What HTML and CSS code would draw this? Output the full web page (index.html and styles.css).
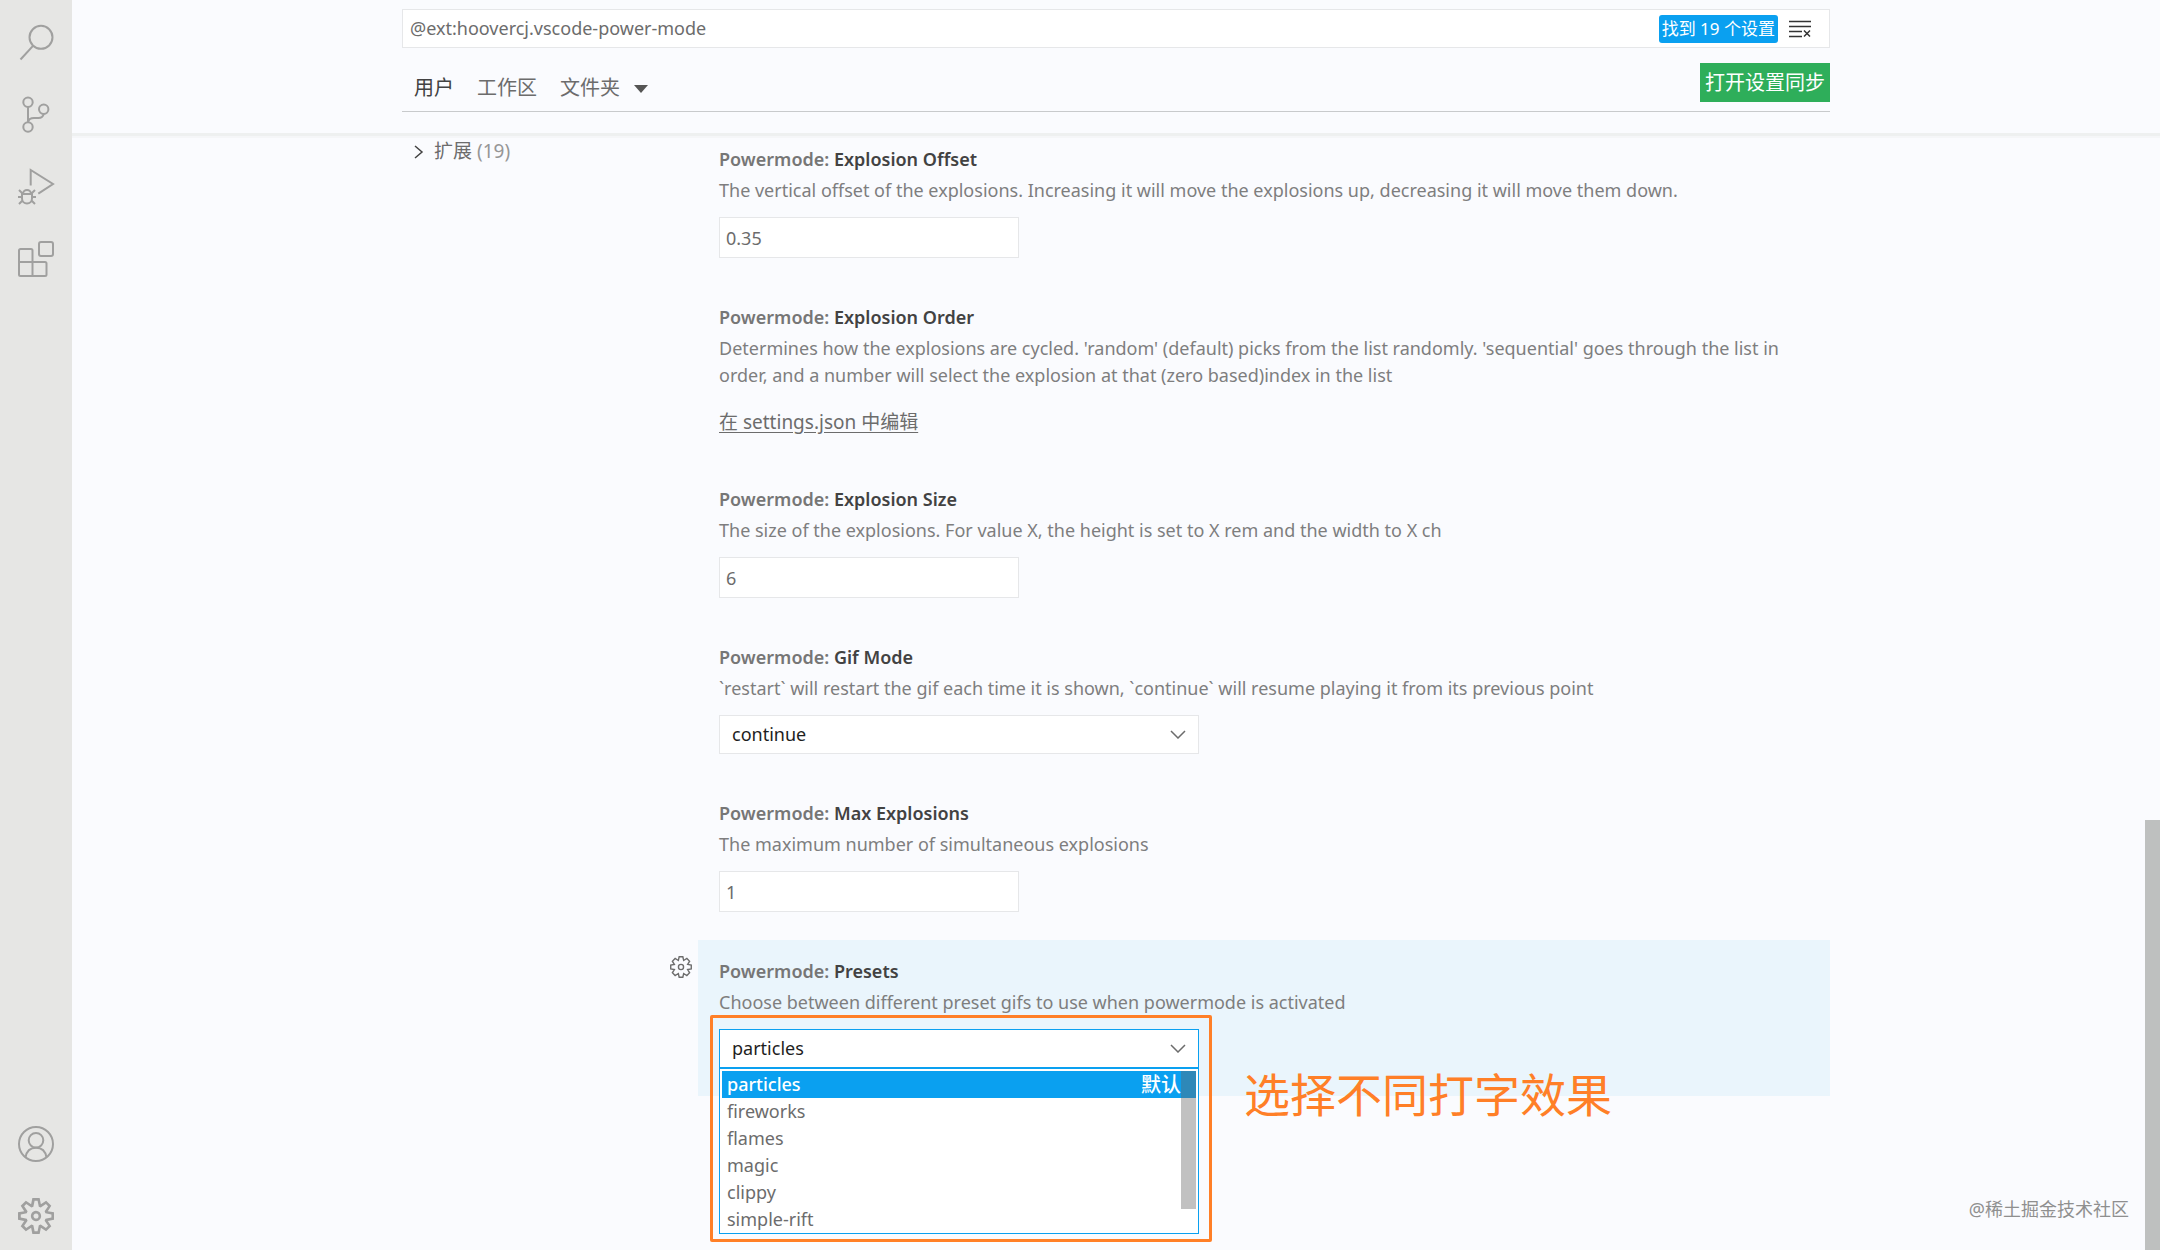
FILE: index.html
```html
<!DOCTYPE html>
<html lang="zh-CN">
<head>
  <meta charset="utf-8">
  <title>设置</title>
  <meta name="viewport" content="width=device-width, initial-scale=1">
  <link rel="stylesheet" href="styles.css">
</head>
<body>
  <nav class="activity-bar">
    <div class="activity-group">
      <button class="activity-item" aria-label="搜索">
        <svg viewBox="0 0 36 36"><circle cx="23" cy="13.3" r="11.5"/><path d="M2.5 35.5L15 21.8"/></svg>
      </button>
      <button class="activity-item" aria-label="源代码管理">
        <svg viewBox="0 0 36 36"><circle cx="10" cy="6.3" r="4.7"/><circle cx="10" cy="31" r="4.7"/><circle cx="25.7" cy="13.3" r="4.7"/><path d="M10 11v15.3M25.7 18c-.7 3-2.5 4-5.2 4H16c-3.5 0-5.5 1.5-6 4.3"/></svg>
      </button>
      <button class="activity-item" aria-label="运行和调试">
        <svg viewBox="0 0 36 36"><path d="M12.7 17.5V2L35 16 20.3 25.6"/><path d="M4 26h10v4.5a5 5 0 0 1-10 0zM5 26c0-5.5 8-5.5 8 0M0 29h4M14 29h4M1 22l3.5 3.5M17 22l-3.5 3.5M1 36l3.5-3.5M17 36l-3.5-3.5"/></svg>
      </button>
      <button class="activity-item" aria-label="扩展">
        <svg viewBox="0 0 36 36"><path d="M2.5 9H13a1.5 1.5 0 0 1 1.5 1.5V22H27a1.5 1.5 0 0 1 1.5 1.5v11A1.5 1.5 0 0 1 27 36H2.5A1.5 1.5 0 0 1 1 34.5v-24A1.5 1.5 0 0 1 2.5 9zM1 22h13.5v14"/><rect x="21" y="2" width="14" height="14" rx="2"/></svg>
      </button>
    </div>
    <div class="activity-group">
      <button class="activity-item" aria-label="帐户">
        <svg viewBox="0 0 36 36"><circle cx="18" cy="18" r="17"/><circle cx="18" cy="14.3" r="7.3"/><path d="M7.5 31.3c1-6 5-9.6 10.5-9.6s9.5 3.6 10.5 9.6"/></svg>
      </button>
      <button class="activity-item" aria-label="管理">
        <svg class="filled" viewBox="0 0 24 24"><path d="M19.85 8.75l4.15.83v4.84l-4.15.83 2.35 3.52-3.43 3.43-3.52-2.35-.83 4.15H9.58l-.83-4.15-3.52 2.35-3.43-3.43 2.35-3.52L0 14.42V9.58l4.15-.83L1.8 5.23 5.23 1.8l3.52 2.35L9.58 0h4.84l.83 4.15 3.52-2.35 3.43 3.43-2.35 3.52zm-1.57 5.07l4-.81v-2l-4-.81-.54-1.3 2.29-3.43-1.43-1.43-3.43 2.29-1.3-.54-.81-4h-2l-.81 4-1.3.54-3.43-2.29-1.43 1.43L6.38 8.9l-.54 1.3-4 .81v2l4 .81.54 1.3-2.29 3.43 1.43 1.43 3.43-2.29 1.3.54.81 4h2l.81-4 1.3-.54 3.43 2.29 1.43-1.43-2.29-3.43.54-1.3zm-8.186-4.672A3.43 3.43 0 0 1 12 8.57 3.44 3.44 0 0 1 15.43 12a3.43 3.43 0 1 1-5.336-2.852zm.956 4.274c.281.188.612.288.95.288A1.7 1.7 0 0 0 13.71 12a1.71 1.71 0 1 0-2.66 1.422z"/></svg>
      </button>
    </div>
  </nav>

  <main class="editor">
    <header class="settings-header">
      <div class="page-width">
        <div class="search-box">
          <input class="search-input" type="text" aria-label="搜索设置" value="@ext:hoovercj.vscode-power-mode">
          <span class="search-count">找到 19 个设置</span>
          <button class="clear-button" aria-label="清除设置搜索输入">
            <svg viewBox="0 0 22 18"><path d="M0 1.5h22M0 6.5h22M0 11.5h13M0 16.5h13M15 10.5l6 6M21 10.5l-6 6"/></svg>
          </button>
        </div>
        <div class="header-controls">
          <div class="tabs">
            <button class="tab active">用户</button>
            <button class="tab">工作区</button>
            <button class="tab">文件夹
              <svg class="caret" viewBox="0 0 14 8"><path d="M0 0h14L7 8z"/></svg>
            </button>
          </div>
          <button class="sync-button">打开设置同步</button>
        </div>
      </div>
    </header>

    <div class="page-width settings-body">
      <aside class="toc">
        <a class="toc-item" href="#settings">
          <svg class="toc-arrow" viewBox="0 0 10 14"><path d="M1 1l7 6-7 6"/></svg>
          扩展 <span class="toc-count">(19)</span>
        </a>
      </aside>

      <section class="settings" id="settings">
        <div class="setting">
          <label class="setting-title" for="offset">Powermode: <b>Explosion Offset</b></label>
          <p class="setting-text">The vertical offset of the explosions. Increasing it will move the explosions up, decreasing it will move them down.</p>
          <input class="setting-input" id="offset" type="text" value="0.35">
        </div>
        <div class="setting">
          <h3 class="setting-title">Powermode: <b>Explosion Order</b></h3>
          <p class="setting-text">Determines how the explosions are cycled. 'random' (default) picks from the list randomly. 'sequential' goes through the list in order, and a number will select the explosion at that (zero based)index in the list</p>
          <a class="setting-link" href="#json">在 settings.json 中编辑</a>
        </div>
        <div class="setting">
          <label class="setting-title" for="size">Powermode: <b>Explosion Size</b></label>
          <p class="setting-text">The size of the explosions. For value X, the height is set to X rem and the width to X ch</p>
          <input class="setting-input" id="size" type="text" value="6">
        </div>
        <div class="setting">
          <label class="setting-title" for="gif-mode">Powermode: <b>Gif Mode</b></label>
          <p class="setting-text">`restart` will restart the gif each time it is shown, `continue` will resume playing it from its previous point</p>
          <div class="select-box">
            <select class="setting-select" id="gif-mode">
              <option>continue</option>
              <option>restart</option>
            </select>
            <svg class="chevron" viewBox="0 0 16 9"><path d="M1 1l7 7 7-7"/></svg>
          </div>
        </div>
        <div class="setting">
          <label class="setting-title" for="max">Powermode: <b>Max Explosions</b></label>
          <p class="setting-text">The maximum number of simultaneous explosions</p>
          <input class="setting-input" id="max" type="text" value="1">
        </div>
        <div class="setting focused">
          <button class="setting-gear" aria-label="更多操作">
            <svg viewBox="0 0 24 24"><path d="M19.2 9.2l4 .8v4l-4 .8 2.2 3.5-3 3-3.5-2.2-.9 4.1h-4l-.9-4.1-3.5 2.2-3-3 2.2-3.5-4-.8v-4l4-.8-2.2-3.5 3-3 3.5 2.2.9-4.1h4l.9 4.1 3.5-2.2 3 3z"/><circle cx="12" cy="12" r="2.8"/></svg>
          </button>
          <label class="setting-title" for="presets">Powermode: <b>Presets</b></label>
          <p class="setting-text">Choose between different preset gifs to use when powermode is activated</p>
          <div class="select-box open">
            <select class="setting-select" id="presets">
              <option>particles</option>
              <option>fireworks</option>
              <option>flames</option>
              <option>magic</option>
              <option>clippy</option>
              <option>simple-rift</option>
            </select>
            <svg class="chevron" viewBox="0 0 16 9"><path d="M1 1l7 7 7-7"/></svg>
            <ul class="dropdown" role="listbox" aria-label="Presets">
              <li class="dropdown-option selected" role="option" aria-selected="true">particles <span class="option-detail">默认</span></li>
              <li class="dropdown-option" role="option">fireworks</li>
              <li class="dropdown-option" role="option">flames</li>
              <li class="dropdown-option" role="option">magic</li>
              <li class="dropdown-option" role="option">clippy</li>
              <li class="dropdown-option" role="option">simple-rift</li>
            </ul>
          </div>
          <div class="marker"></div>
          <div class="marker-note">选择不同打字效果</div>
        </div>
      </section>
    </div>
    <div class="scrollbar"></div>
    <div class="watermark">@稀土掘金技术社区</div>
  </main>
</body>
</html>
```
FILE: styles.css
```css
* {
  box-sizing: border-box;
  margin: 0;
  padding: 0;
}

body {
  display: flex;
  min-height: 100vh;
  overflow: hidden;
  font-family: "Noto Sans", "Noto Sans CJK SC", sans-serif;
  font-size: 18px;
  line-height: 27px;
  color: #6c6c6c;
  background-color: #fafbfe;
}

button,
input,
select {
  font: inherit;
  color: inherit;
  border: none;
  background: none;
}

svg {
  display: block;
  fill: none;
  stroke: currentColor;
}

.activity-bar {
  display: flex;
  flex-direction: column;
  justify-content: space-between;
  flex: 0 0 72px;
  padding: 24px 18px 16px;
  background-color: #e6e6e4;
}

.activity-group {
  display: flex;
  flex-direction: column;
  gap: 36px;
}

.activity-item {
  height: 36px;
  color: #a0a09f;
}

.activity-item svg {
  width: 36px;
  height: 36px;
  stroke-width: 2;
  overflow: visible;
}

.activity-item .filled {
  fill: currentColor;
  stroke: none;
}

.editor {
  position: relative;
  flex: 1;
}

.page-width {
  max-width: 1428px;
  margin: 0 auto;
}

.settings-header {
  height: 133px;
  padding-top: 9px;
  box-shadow: 0 3px 0 #eef0f0, 0 5px 0 #f5f6f8;
}

.search-box {
  display: flex;
  align-items: center;
  height: 39px;
  padding: 0 18px 0 7px;
  border: 1px solid #e6e7e9;
  background-color: #fff;
}

.search-input {
  flex: 1;
}

.search-count {
  padding: 0 3px;
  border-radius: 3px;
  font-size: 17px;
  line-height: 28px;
  color: #fff;
  background-color: #0aa0f0;
}

.clear-button {
  margin-left: 11px;
  color: #333;
}

.clear-button svg {
  width: 22px;
  height: 18px;
  stroke-width: 1.5;
}

.header-controls {
  display: flex;
  justify-content: space-between;
  padding: 15px 0 9px;
  border-bottom: 1px solid #c8cacc;
}

.tabs {
  display: flex;
  align-items: center;
  gap: 23px;
  padding: 9px 12px 0;
  font-size: 20px;
}

.tab {
  display: flex;
  align-items: center;
}

.tab.active {
  color: #424242;
}

.caret {
  width: 14px;
  height: 8px;
  margin: 4px 0 0 14px;
  fill: #555;
  stroke: none;
}

.sync-button {
  padding: 6px 5px;
  font-size: 20px;
  color: #fff;
  background-color: #2eae5a;
}

.settings-body {
  display: grid;
  grid-template-columns: 296px 1fr;
}

.toc {
  padding: 5px 12px;
}

.toc-item {
  display: flex;
  align-items: center;
  gap: 5px;
  font-size: 19px;
  color: #6c6c6c;
  text-decoration: none;
}

.toc-arrow {
  width: 10px;
  height: 14px;
  margin-right: 5px;
  color: #424242;
  stroke-width: 1.5;
}

.toc-count {
  color: #969696;
}

.settings {
  margin-top: -5px;
}

.setting {
  position: relative;
  padding: 18px 21px 28px;
}

.setting.focused {
  background-color: #eaf5fc;
}

.setting-title {
  display: block;
  margin-bottom: 4px;
  font-size: 18px;
  font-weight: 600;
  color: #767676;
}

.setting-title b {
  font-weight: 600;
  color: #424242;
}

.setting-text {
  margin-bottom: 13px;
  color: #7e7e7e;
}

.setting-link {
  display: block;
  margin: 20px 0 4px;
  font-size: 19px;
  color: #6c6c6c;
  text-underline-offset: 3px;
}

.setting-input {
  display: block;
  width: 300px;
  height: 41px;
  padding: 0 6px;
  border: 1px solid #e6e7e9;
  background-color: #fff;
}

.select-box {
  position: relative;
  width: 480px;
}

.setting-select {
  display: block;
  width: 100%;
  height: 39px;
  padding: 0 12px;
  border: 1px solid #e6e7e9;
  appearance: none;
  color: #1e1e1e;
  background-color: #fff;
}

.open .setting-select {
  border-color: #0aa0f0;
}

.chevron {
  position: absolute;
  top: 15px;
  right: 13px;
  width: 16px;
  height: 9px;
  stroke-width: 1.5;
}

.dropdown {
  position: absolute;
  top: 38px;
  left: 0;
  z-index: 1;
  width: 100%;
  padding: 2px 2px 0;
  border: 1px solid #0aa0f0;
  border-top-width: 2px;
  list-style: none;
  background-color: #fff;
}

/* scroll thumb of the list */
.dropdown::after {
  content: "";
  position: absolute;
  top: 2px;
  right: 2px;
  width: 15px;
  height: 138px;
  background-color: rgba(100, 100, 100, 0.4);
}

.dropdown-option {
  display: flex;
  justify-content: space-between;
  padding: 0 15px 0 5px;
}

.dropdown-option.selected {
  font-weight: 500;
  color: #fff;
  background-color: #0aa0f0;
}

.option-detail {
  font-size: 20px;
}

.setting-gear {
  position: absolute;
  top: 16px;
  left: -28px;
}

.setting-gear svg {
  width: 22px;
  height: 22px;
  stroke-width: 1.5;
}

.marker {
  position: absolute;
  top: 75px;
  left: 12px;
  width: 502px;
  height: 227px;
  border: 3px solid #ff7f27;
  border-radius: 2px;
}

.marker-note {
  position: absolute;
  top: 127px;
  left: 546px;
  font-size: 46px;
  line-height: 54px;
  color: #ff7f27;
}

.scrollbar {
  position: absolute;
  right: 0;
  bottom: 0;
  width: 15px;
  height: 430px;
  background-color: #bec0bf;
}

.watermark {
  position: absolute;
  right: 31px;
  bottom: 27px;
  font-size: 18px;
  color: #8f8f8f;
}
```
